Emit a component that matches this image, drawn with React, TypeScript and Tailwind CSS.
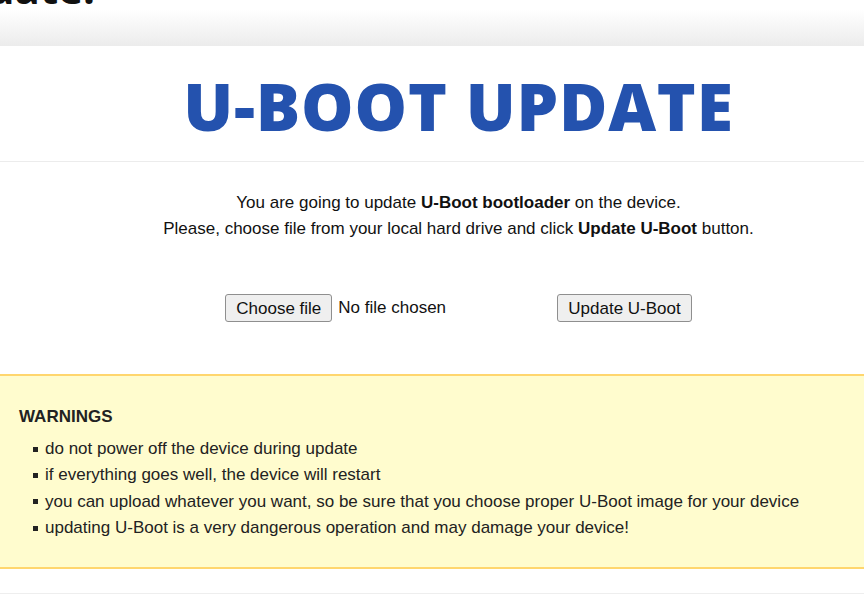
import React from "react";

export default function App() {
  return (
    <div className="w-[864px] h-[595px] overflow-hidden bg-white" style={{ fontFamily: '"Liberation Sans", Arial, sans-serif' }}>
      <div className="w-[917px]">
        {/* top header remnant */}
        <div className="h-[46px] bg-gradient-to-b from-white from-[20%] to-[#ececec] overflow-hidden">
          <div
            className="mt-[-37px] ml-[-12px] text-[42px] font-bold leading-[50px] text-[#111]"
            style={{ fontFamily: '"Open Sans", "Noto Sans", sans-serif' }}
          >
            date.
          </div>
        </div>
        {/* title */}
        <div className="h-[116px] flex items-center justify-center border-b border-[#ececec]">
          <h1
            className="text-[66px] font-extrabold leading-none text-[#2452ae] tracking-[0.8px] mt-[2px]"
            style={{ fontFamily: '"Open Sans", "Noto Sans", sans-serif' }}
          >
            U-BOOT UPDATE
          </h1>
        </div>
        {/* description */}
        <div className="pt-[28px] text-center text-[17px] leading-[26px] text-[#111]">
          <p>
            You are going to update <b>U-Boot bootloader</b> on the device.
          </p>
          <p>
            Please, choose file from your local hard drive and click <b>Update U-Boot</b> button.
          </p>
        </div>
        {/* form */}
        <div className="mt-[52px] flex justify-center items-center gap-[18px]">
          <div className="w-[314px] flex items-center">
            <button className="h-[28px] px-[10px] bg-[#efefef] border border-[#8f8f8f] rounded-[3px] text-[17px] text-[#111] leading-none">
              Choose file
            </button>
            <span className="ml-[6px] text-[17px] text-[#111]">No file chosen</span>
          </div>
          <button className="h-[28px] px-[10px] bg-[#efefef] border border-[#8f8f8f] rounded-[3px] text-[17px] text-[#111] leading-none">
            Update U-Boot
          </button>
        </div>
        {/* warnings */}
        <div className="mt-[52px] h-[195px] bg-[#fffcce] border-y-2 border-[#ffd66e] pt-[30px] pl-[19px] text-[#222]">
          <h3 className="text-[17px] font-bold leading-[22px]">WARNINGS</h3>
          <ul className="mt-[8px] text-[17px] leading-[26.3px]">
            {[
              "do not power off the device during update",
              "if everything goes well, the device will restart",
              "you can upload whatever you want, so be sure that you choose proper U-Boot image for your device",
              "updating U-Boot is a very dangerous operation and may damage your device!",
            ].map((t) => (
              <li key={t} className="flex items-center">
                <span className="ml-[14px] mr-[7px] w-[5px] h-[5px] bg-[#222] inline-block" />
                {t}
              </li>
            ))}
          </ul>
        </div>
        <div className="h-[25px] border-b border-[#eeeeee]" />
      </div>
    </div>
  );
}
